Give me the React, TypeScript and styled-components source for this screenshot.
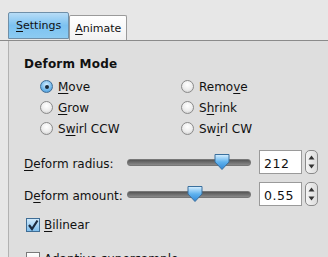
import React from "react";
import styled, { createGlobalStyle } from "styled-components";

const Global = createGlobalStyle`
  html, body { margin: 0; padding: 0; }
  body {
    width: 328px; height: 257px; overflow: hidden;
    background: #e7e7e7;
    font-family: "DejaVu Sans", "Liberation Sans", sans-serif;
    font-size: 12px; color: #111;
  }
`;

const Window = styled.div`
  width: 328px; height: 257px; overflow: hidden;
  display: flex; flex-direction: column;
`;

const TabBar = styled.div`
  height: 41px; box-sizing: border-box;
  padding: 12px 0 0 8px;
  display: flex; align-items: flex-end;
  border-bottom: 1px solid #8a8a8a;
  flex-shrink: 0;
`;

const Tab = styled.div<{ $active?: boolean }>`
  box-sizing: border-box;
  height: ${(p) => (p.$active ? 27 : 25)}px;
  margin-bottom: ${(p) => (p.$active ? 1 : 0)}px;
  padding: 0 ${(p) => (p.$active ? 7 : 5)}px;
  display: flex; align-items: center;
  font-size: 11px;
  border: 1px solid ${(p) => (p.$active ? "#6f8fa8" : "#9a9a9a")};
  border-bottom: ${(p) => (p.$active ? "1px solid #6f8fa8" : "none")};
  border-radius: 2px 2px 0 0;
  background: ${(p) =>
    p.$active
      ? "linear-gradient(#b7dcf6, #7cc2f1 50%, #8ccbf2)"
      : "linear-gradient(#ffffff, #f2f2f2)"};
  color: #111;
`;

const Panel = styled.div`
  flex: 1;
  margin-left: 8px;
  border-left: 1px solid #b2b2b2;
  background: #dedede;
  padding: 15px 0 0 15px;
  display: flex; flex-direction: column;
`;

const SectionTitle = styled.div`
  font-weight: bold; font-size: 12px; letter-spacing: 0.2px;
  height: 16px; line-height: 16px;
`;

const RadioGrid = styled.div`
  display: grid;
  grid-template-columns: 141px 1fr;
  row-gap: 4px;
  padding: 6px 0 0 16px;
`;

const RadioRow = styled.label`
  display: flex; align-items: center; gap: 5px;
  height: 17px;
`;

const RadioCircle = styled.span<{ $on?: boolean }>`
  width: 13px; height: 13px; box-sizing: border-box;
  border-radius: 50%;
  border: 1px solid ${(p) => (p.$on ? "#3f6d95" : "#8a8a8a")};
  background: ${(p) =>
    p.$on
      ? "radial-gradient(circle at 50% 35%, #d7efff 0%, #6fb6ea 60%, #3d8cd0 100%)"
      : "radial-gradient(circle at 50% 35%, #ffffff 0%, #ececec 55%, #c4c4c4 100%)"};
  display: flex; align-items: center; justify-content: center;
  &::after {
    content: "";
    display: ${(p) => (p.$on ? "block" : "none")};
    width: 4px; height: 4px; border-radius: 50%;
    background: #1a2a3a;
  }
`;

const U = styled.span`
  text-decoration: underline;
  text-underline-offset: 2px;
`;

const SliderRows = styled.div`
  display: flex; flex-direction: column; gap: 8px;
  margin-top: 13px;
`;

const SliderRow = styled.div`
  display: flex; align-items: center;
  height: 24px;
`;

const SliderLabel = styled.div`
  width: 103px;
  padding-top: 3px;
`;

const Track = styled.div`
  position: relative;
  width: 122px; height: 5px;
  border-radius: 3px;
  background: linear-gradient(#555, #8a8a8a);
  border: 1px solid #777;
  margin-right: 8px;
`;

const Thumb = styled.svg`
  position: absolute; top: -7px;
`;

const NumBox = styled.div`
  box-sizing: border-box;
  width: 43px; height: 24px;
  border: 1px solid #9a9a9a;
  background: #fff;
  padding: 3px 0 0 4px;
  display: flex; align-items: center;
  font-size: 12.5px; letter-spacing: 0.5px;
`;

const Spin = styled.div`
  box-sizing: border-box;
  width: 13px; height: 24px; margin-left: 3px;
  border: 1px solid #8a8a8a; border-radius: 5px;
  background: linear-gradient(90deg, #f4f4f4, #dcdcdc);
  display: flex; flex-direction: column; align-items: center; justify-content: space-evenly;
`;

const CheckRow = styled.label`
  display: flex; align-items: center; gap: 4px;
  height: 16px;
  padding-left: 2px;
`;

const CheckBox = styled.span<{ $on?: boolean }>`
  width: 14px; height: 14px; box-sizing: border-box;
  border: 1px solid ${(p) => (p.$on ? "#3f6d95" : "#7a7a7a")};
  background: ${(p) => (p.$on ? "linear-gradient(#cfe9fb, #7fbfee)" : "linear-gradient(#fff, #e6e6e6)")};
  display: flex; align-items: center; justify-content: center;
`;

const Checks = styled.div`
  display: flex; flex-direction: column; gap: 18px;
  margin-top: 11px;
`;

const ThumbShape = ({ left }: { left: number }) => (
  <Thumb style={{ left }} width="18" height="18" viewBox="0 0 18 18">
    <defs>
      <linearGradient id={`tg${left}`} x1="0" y1="0" x2="0" y2="1">
        <stop offset="0" stopColor="#d9f0ff" />
        <stop offset="0.5" stopColor="#5fb2ee" />
        <stop offset="1" stopColor="#2f86d6" />
      </linearGradient>
    </defs>
    <path d="M2 1.5 H16 V9 L9 16.5 L2 9 Z" fill={`url(#tg${left})`} stroke="#3a6f9d" strokeWidth="1" strokeLinejoin="round" />
  </Thumb>
);

const Arrows = () => (
  <Spin>
    <svg width="7" height="5" viewBox="0 0 7 5"><path d="M0.5 4.5 L3.5 0.5 L6.5 4.5 Z" fill="#333" /></svg>
    <svg width="7" height="5" viewBox="0 0 7 5"><path d="M0.5 0.5 L3.5 4.5 L6.5 0.5 Z" fill="#333" /></svg>
  </Spin>
);

export default function App() {
  return (
    <Window>
      <Global />
      <TabBar>
        <Tab $active><U>S</U>ettings</Tab>
        <Tab><U>A</U>nimate</Tab>
      </TabBar>
      <Panel>
        <SectionTitle>Deform Mode</SectionTitle>
        <RadioGrid>
          <RadioRow><RadioCircle $on /><span><U>M</U>ove</span></RadioRow>
          <RadioRow><RadioCircle /><span>Remo<U>v</U>e</span></RadioRow>
          <RadioRow><RadioCircle /><span><U>G</U>row</span></RadioRow>
          <RadioRow><RadioCircle /><span>S<U>h</U>rink</span></RadioRow>
          <RadioRow><RadioCircle /><span>S<U>w</U>irl CCW</span></RadioRow>
          <RadioRow><RadioCircle /><span>Sw<U>i</U>rl CW</span></RadioRow>
        </RadioGrid>
        <SliderRows>
          <SliderRow>
            <SliderLabel><U>D</U>eform radius:</SliderLabel>
            <Track><ThumbShape left={85} /></Track>
            <NumBox>212</NumBox>
            <Arrows />
          </SliderRow>
          <SliderRow>
            <SliderLabel>D<U>e</U>form amount:</SliderLabel>
            <Track><ThumbShape left={58} /></Track>
            <NumBox>0.55</NumBox>
            <Arrows />
          </SliderRow>
        </SliderRows>
        <Checks>
          <CheckRow>
            <CheckBox $on>
              <svg width="12" height="12" viewBox="0 0 12 12"><path d="M2 6 L5 10 L10.5 1.5" fill="none" stroke="#1b2b40" strokeWidth="2.2" /></svg>
            </CheckBox>
            <span><U>B</U>ilinear</span>
          </CheckRow>
          <CheckRow>
            <CheckBox />
            <span>Adaptive supersample</span>
          </CheckRow>
        </Checks>
      </Panel>
    </Window>
  );
}
